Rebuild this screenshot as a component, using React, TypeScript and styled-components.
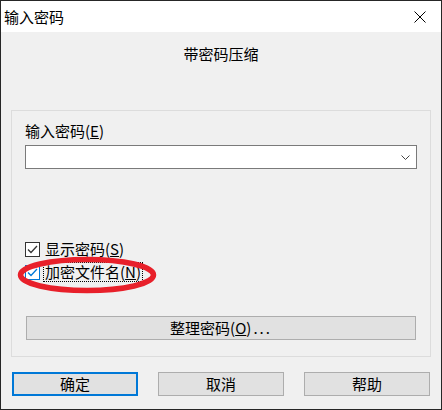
import React from "react";
import styled, { createGlobalStyle } from "styled-components";

const Global = createGlobalStyle`
  html, body { margin: 0; padding: 0; background: #ffffff; }
  body { font-family: "Noto Sans CJK SC", "Liberation Sans", sans-serif; }
  * { box-sizing: border-box; }
`;

const Window = styled.div`
  width: 442px;
  height: 410px;
  border: 1px solid #262626;
  display: flex;
  flex-direction: column;
  background: #f0f0f0;
  font-family: "Noto Sans CJK SC", "Liberation Sans", sans-serif;
  font-size: 15px;
  color: #000;
`;

const TitleBar = styled.div`
  height: 31px;
  background: #ffffff;
  display: flex;
  align-items: center;
  justify-content: space-between;
  padding: 0 15px 0 3px;
`;

const TitleText = styled.span`
  font-size: 15px;
  line-height: 20px;
`;

const CloseIcon = styled.svg`
  width: 12px;
  height: 12px;
  display: block;
`;

const Body = styled.div`
  flex: 1;
  display: flex;
  flex-direction: column;
  padding: 0 10px;
`;

const Heading = styled.div`
  margin-top: 12px;
  height: 20px;
  line-height: 20px;
  text-align: center;
`;

const GroupBox = styled.div`
  position: relative;
  margin-top: 46px;
  height: 247px;
  border: 1px solid #dcdcdc;
  padding: 10px 13px 0 13px;
  display: flex;
  flex-direction: column;
`;

const FieldLabel = styled.div`
  height: 20px;
  line-height: 20px;
`;

const Combo = styled.div`
  margin-top: 4px;
  width: 392px;
  height: 24px;
  align-self: center;
  background: #ffffff;
  border: 1px solid #7a7a7a;
  display: flex;
  align-items: center;
  justify-content: flex-end;
  padding-right: 6px;
`;

const Chevron = styled.svg`
  width: 9px;
  height: 5px;
  display: block;
`;

const CheckRow = styled.div<{ $top: number }>`
  margin-top: ${(p) => p.$top}px;
  height: 20px;
  display: flex;
  align-items: center;
  gap: 3px;
`;

const Box = styled.span<{ $accent: boolean }>`
  width: 15px;
  height: 15px;
  border: 1px solid ${(p) => (p.$accent ? "#0078d7" : "#333333")};
  background: #ffffff;
  display: flex;
  align-items: center;
  justify-content: center;
`;

const CheckLabel = styled.span<{ $focused: boolean }>`
  line-height: 18px;
  padding: 0 1px;
  border: 1px dotted ${(p) => (p.$focused ? "#000000" : "transparent")};
`;

const WideButton = styled.div`
  margin-top: 34px;
  width: 390px;
  height: 24px;
  align-self: center;
  background: #e1e1e1;
  border: 1px solid #adadad;
  display: flex;
  align-items: center;
  justify-content: center;
  line-height: 20px;
`;

const Dots = styled.span`
  letter-spacing: 2px;
  margin-left: 2px;
`;

const Footer = styled.div`
  margin-top: 15px;
  padding: 0 1px;
  display: flex;
  gap: 20px;
`;

const DialogButton = styled.div<{ $default?: boolean }>`
  width: 126px;
  height: 24px;
  background: #e1e1e1;
  border: ${(p) => (p.$default ? "2px solid #0078d7" : "1px solid #adadad")};
  display: flex;
  align-items: center;
  justify-content: center;
  line-height: 20px;
`;

const Annotation = styled.svg`
  position: absolute;
  left: 4px;
  top: 144px;
  width: 142px;
  height: 40px;
  pointer-events: none;
`;

const Check = ({ color }: { color: string }) => (
  <svg width="13" height="13" viewBox="0 0 13 13">
    <path d="M2 6.5 L5 9.5 L11 3" fill="none" stroke={color} strokeWidth="1.3" />
  </svg>
);

export default function App() {
  return (
    <>
      <Global />
      <Window>
        <TitleBar>
          <TitleText>输入密码</TitleText>
          <CloseIcon viewBox="0 0 12 12">
            <path d="M0.5 0.5 L11.5 11.5 M11.5 0.5 L0.5 11.5" stroke="#000" strokeWidth="1" fill="none" />
          </CloseIcon>
        </TitleBar>
        <Body>
          <Heading>带密码压缩</Heading>
          <GroupBox>
            <FieldLabel>
              输入密码(<u>E</u>)
            </FieldLabel>
            <Combo>
              <Chevron viewBox="0 0 9 5">
                <path d="M0.5 0.5 L4.5 4.5 L8.5 0.5" stroke="#444" strokeWidth="1" fill="none" />
              </Chevron>
            </Combo>
            <CheckRow $top={70}>
              <Box $accent={false}>
                <Check color="#333333" />
              </Box>
              <CheckLabel $focused={false}>
                显示密码(<u>S</u>)
              </CheckLabel>
            </CheckRow>
            <CheckRow $top={3}>
              <Box $accent={true}>
                <Check color="#0078d7" />
              </Box>
              <CheckLabel $focused={true}>
                加密文件名(<u>N</u>)
              </CheckLabel>
            </CheckRow>
            <WideButton>
              整理密码(<u>O</u>)<Dots>...</Dots>
            </WideButton>
            <Annotation viewBox="0 0 142 40">
              <ellipse cx="71" cy="20" rx="66.5" ry="15.5" fill="none" stroke="#e8202a" strokeWidth="5.5" />
            </Annotation>
          </GroupBox>
          <Footer>
            <DialogButton $default>确定</DialogButton>
            <DialogButton>取消</DialogButton>
            <DialogButton>帮助</DialogButton>
          </Footer>
        </Body>
      </Window>
    </>
  );
}
